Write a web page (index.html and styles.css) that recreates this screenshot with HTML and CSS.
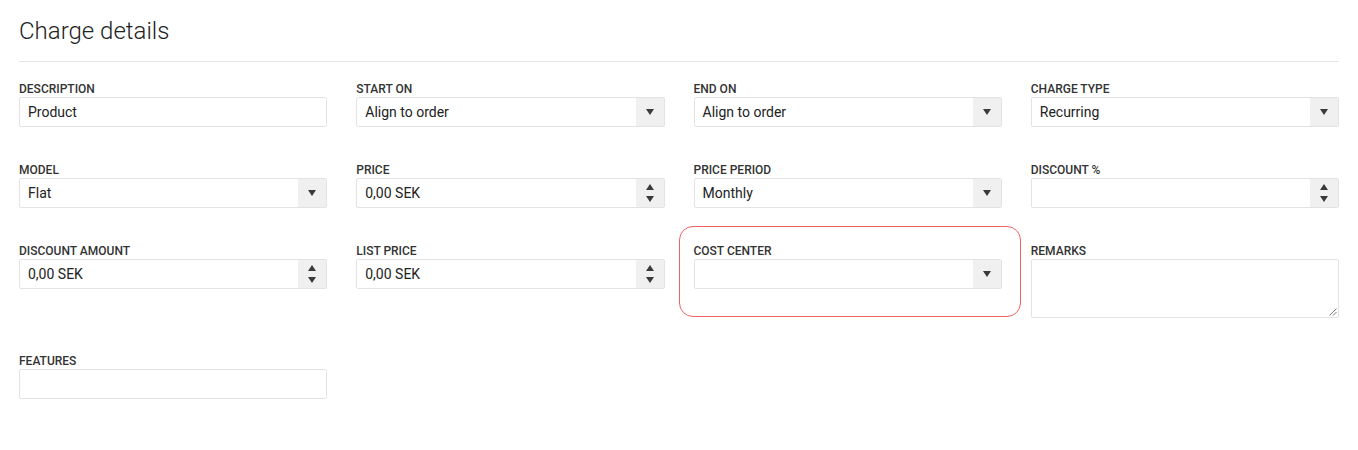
FILE: index.html
```html
<!DOCTYPE html>
<html lang="en">
<head>
<meta charset="utf-8">
<title>Charge details</title>
<link rel="stylesheet" href="styles.css">
</head>
<body>
<div class="page">
  <h1 class="title">Charge details</h1>
  <div class="divider"></div>
  <div class="grid">
    <div class="field">
      <div class="label">DESCRIPTION</div>
      <div class="control"><span class="value">Product</span></div>
    </div>
    <div class="field">
      <div class="label">START ON</div>
      <div class="control"><span class="value">Align to order</span><span class="addon"><span class="tri-down"></span></span></div>
    </div>
    <div class="field">
      <div class="label">END ON</div>
      <div class="control"><span class="value">Align to order</span><span class="addon"><span class="tri-down"></span></span></div>
    </div>
    <div class="field">
      <div class="label">CHARGE TYPE</div>
      <div class="control"><span class="value">Recurring</span><span class="addon"><span class="tri-down"></span></span></div>
    </div>

    <div class="field">
      <div class="label">MODEL</div>
      <div class="control"><span class="value">Flat</span><span class="addon"><span class="tri-down"></span></span></div>
    </div>
    <div class="field">
      <div class="label">PRICE</div>
      <div class="control"><span class="value">0,00 SEK</span><span class="addon spin"><span class="tri-up"></span><span class="tri-down"></span></span></div>
    </div>
    <div class="field">
      <div class="label">PRICE PERIOD</div>
      <div class="control"><span class="value">Monthly</span><span class="addon"><span class="tri-down"></span></span></div>
    </div>
    <div class="field">
      <div class="label">DISCOUNT %</div>
      <div class="control"><span class="value"></span><span class="addon spin"><span class="tri-up"></span><span class="tri-down"></span></span></div>
    </div>

    <div class="field">
      <div class="label">DISCOUNT AMOUNT</div>
      <div class="control"><span class="value">0,00 SEK</span><span class="addon spin"><span class="tri-up"></span><span class="tri-down"></span></span></div>
    </div>
    <div class="field">
      <div class="label">LIST PRICE</div>
      <div class="control"><span class="value">0,00 SEK</span><span class="addon spin"><span class="tri-up"></span><span class="tri-down"></span></span></div>
    </div>
    <div class="field highlighted">
      <div class="label">COST CENTER</div>
      <div class="control"><span class="value"></span><span class="addon"><span class="tri-down"></span></span></div>
    </div>
    <div class="field">
      <div class="label">REMARKS</div>
      <div class="control textarea">
        <svg class="grip" width="9" height="9" viewBox="0 0 9 9"><path d="M8.5 1.5 L1.5 8.5 M8.5 5 L5 8.5" stroke="#777" stroke-width="1" fill="none"/></svg>
      </div>
    </div>

    <div class="field">
      <div class="label">FEATURES</div>
      <div class="control"><span class="value"></span></div>
    </div>
  </div>
</div>
</body>
</html>
```
FILE: styles.css
```css
* { box-sizing: border-box; }
html, body { margin: 0; padding: 0; background: #fff; }
body {
  font-family: Roboto, "Liberation Sans", Arial, sans-serif;
  color: #222;
}
.page {
  padding: 0 19px 0 19px;
}
.title {
  margin: 17px 0 0 0;
  font-size: 24px;
  line-height: 28px;
  font-weight: 300;
  color: #222;
}
.divider {
  margin-top: 16px;
  height: 1px;
  background: #e4e4e4;
}
.grid {
  margin-top: 20px;
  display: grid;
  grid-template-columns: repeat(4, 1fr);
  column-gap: 29px;
  row-gap: 36px;
}
.field {
  display: flex;
  flex-direction: column;
}
.label {
  font-size: 12px;
  line-height: 14px;
  font-weight: 500;
  color: #333;
  margin-bottom: 1px;
}
.control {
  height: 30px;
  border: 1px solid #e3e3e3;
  border-radius: 2px;
  display: flex;
  align-items: stretch;
  background: #fff;
}
.value {
  flex: 1;
  padding-left: 8px;
  font-size: 14px;
  line-height: 28px;
  color: #222;
}
.addon {
  width: 28px;
  background: #f0f0f0;
  display: flex;
  align-items: center;
  justify-content: center;
}
.addon.spin {
  flex-direction: column;
  gap: 6px;
}
.tri-down {
  width: 0;
  height: 0;
  border-left: 4px solid transparent;
  border-right: 4px solid transparent;
  border-top: 6px solid #3a3a3a;
}
.tri-up {
  width: 0;
  height: 0;
  border-left: 4px solid transparent;
  border-right: 4px solid transparent;
  border-bottom: 6px solid #3a3a3a;
}
.textarea {
  height: 59px;
  position: relative;
}
.grip {
  position: absolute;
  right: 1px;
  bottom: 1px;
}
.highlighted {
  position: relative;
}
.highlighted::before {
  content: "";
  position: absolute;
  top: -18px;
  left: -15px;
  right: -19px;
  bottom: 1px;
  border: 1px solid #ef6262;
  border-radius: 14px;
  pointer-events: none;
}
```
